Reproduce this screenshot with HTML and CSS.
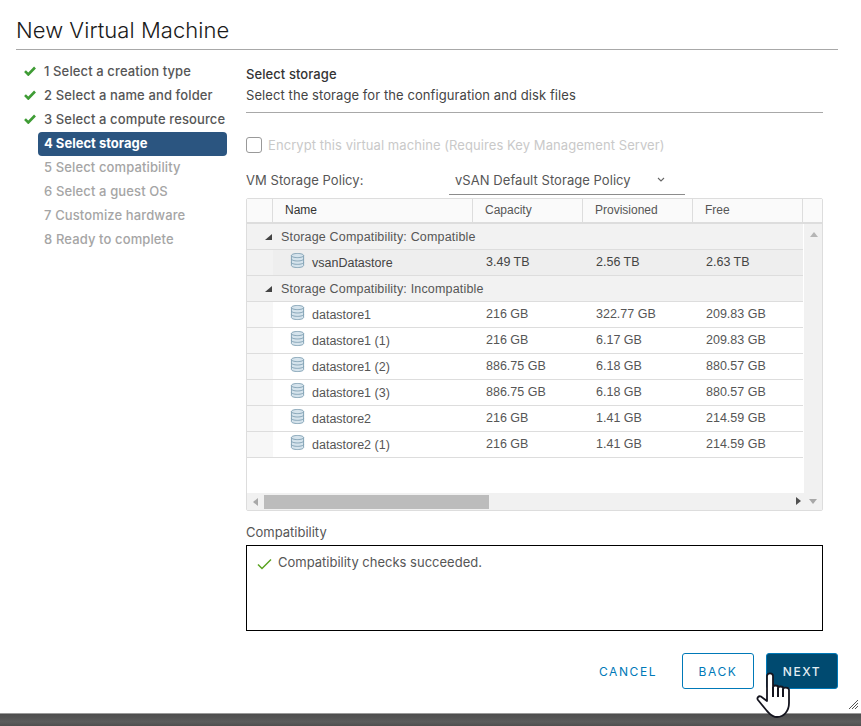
FILE: index.html
```html
<!DOCTYPE html>
<html lang="en">
<head>
  <meta charset="UTF-8">
  <title>New Virtual Machine</title>
  <link rel="stylesheet" href="styles.css">
</head>
<body>
  <svg class="defs" width="0" height="0">
    <symbol id="db" viewBox="0 0 16 17">
      <path d="M1.5 3.2C1.5 1.9 4.4 1 8 1s6.500.9 6.500 2.200v10.600C14.500 15.100 11.600 16 8 16s-6.500-.9-6.500-2.200z" fill="#d5e3ec" stroke="#7f9fb2"/>
      <path d="M1.500 3.200C1.500 4.500 4.400 5.400 8 5.400s6.500-.9 6.500-2.200M1.500 6.800C1.500 8.100 4.400 9 8 9s6.500-.9 6.500-2.200M1.500 10.400c0 1.300 2.900 2.200 6.500 2.200s6.500-.9 6.500-2.200" fill="none" stroke="#7f9fb2"/>
    </symbol>
    <symbol id="tick" viewBox="0 0 12 10">
      <path d="M1 5.200l3.300 3.300L11 1.500" fill="none" stroke="#3f9c35" stroke-width="2.600"/>
    </symbol>
  </svg>

  <div class="dialog">
    <h1 class="title">New Virtual Machine</h1>

    <div class="content">
      <ul class="steps">
        <li class="step done"><svg class="tick"><use href="#tick"/></svg>1 Select a creation type</li>
        <li class="step done"><svg class="tick"><use href="#tick"/></svg>2 Select a name and folder</li>
        <li class="step done"><svg class="tick"><use href="#tick"/></svg>3 Select a compute resource</li>
        <li class="step active">4 Select storage</li>
        <li class="step">5 Select compatibility</li>
        <li class="step">6 Select a guest OS</li>
        <li class="step">7 Customize hardware</li>
        <li class="step">8 Ready to complete</li>
      </ul>

      <div class="main">
        <h2 class="section-title">Select storage</h2>
        <p class="section-desc">Select the storage for the configuration and disk files</p>

        <label class="encrypt"><span class="checkbox"></span>Encrypt this virtual machine (Requires Key Management Server)</label>

        <div class="policy">
          <span class="policy-label">VM Storage Policy:</span>
          <div class="policy-select">vSAN Default Storage Policy
            <svg class="chevron" width="8" height="5" viewBox="0 0 8 5"><path d="M1 1l3 3 3-3" fill="none" stroke="#666" stroke-width="1.100"/></svg>
          </div>
        </div>

        <div class="grid">
          <div class="grid-head">
            <div class="hcell hcell-check"></div>
            <div class="hcell hcell-name">Name</div>
            <div class="hcell">Capacity</div>
            <div class="hcell">Provisioned</div>
            <div class="hcell">Free</div>
            <div class="hcell hcell-end"></div>
          </div>
          <div class="grid-mid">
            <div class="grid-body">
              <div class="group group-first"><i class="caret"></i>Storage Compatibility: Compatible</div>
              <div class="row selected">
                <div class="gutter"></div>
                <div class="cell cell-name"><svg class="db"><use href="#db"/></svg>vsanDatastore</div>
                <div class="cell">3.49 TB</div><div class="cell">2.56 TB</div><div class="cell">2.63 TB</div>
              </div>
              <div class="group"><i class="caret"></i>Storage Compatibility: Incompatible</div>
              <div class="row">
                <div class="gutter"></div>
                <div class="cell cell-name"><svg class="db"><use href="#db"/></svg>datastore1</div>
                <div class="cell">216 GB</div><div class="cell">322.77 GB</div><div class="cell">209.83 GB</div>
              </div>
              <div class="row">
                <div class="gutter"></div>
                <div class="cell cell-name"><svg class="db"><use href="#db"/></svg>datastore1 (1)</div>
                <div class="cell">216 GB</div><div class="cell">6.17 GB</div><div class="cell">209.83 GB</div>
              </div>
              <div class="row">
                <div class="gutter"></div>
                <div class="cell cell-name"><svg class="db"><use href="#db"/></svg>datastore1 (2)</div>
                <div class="cell">886.75 GB</div><div class="cell">6.18 GB</div><div class="cell">880.57 GB</div>
              </div>
              <div class="row">
                <div class="gutter"></div>
                <div class="cell cell-name"><svg class="db"><use href="#db"/></svg>datastore1 (3)</div>
                <div class="cell">886.75 GB</div><div class="cell">6.18 GB</div><div class="cell">880.57 GB</div>
              </div>
              <div class="row">
                <div class="gutter"></div>
                <div class="cell cell-name"><svg class="db"><use href="#db"/></svg>datastore2</div>
                <div class="cell">216 GB</div><div class="cell">1.41 GB</div><div class="cell">214.59 GB</div>
              </div>
              <div class="row">
                <div class="gutter"></div>
                <div class="cell cell-name"><svg class="db"><use href="#db"/></svg>datastore2 (1)</div>
                <div class="cell">216 GB</div><div class="cell">1.41 GB</div><div class="cell">214.59 GB</div>
              </div>
            </div>
            <div class="vscroll"><i class="arrow-up"></i></div>
          </div>
          <div class="hscroll">
            <i class="arrow-left"></i>
            <div class="hthumb"></div>
            <i class="arrow-right"></i>
            <i class="arrow-down"></i>
          </div>
        </div>

        <div class="compat-label">Compatibility</div>
        <div class="compat-box">
          <svg class="compat-tick" width="15" height="12" viewBox="0 0 15 12"><path d="M1 6.500l4 4L14 1.500" fill="none" stroke="#5aa220" stroke-width="1.500"/></svg>
          Compatibility checks succeeded.
        </div>
      </div>
    </div>

    <div class="actions">
      <button class="btn btn-flat">CANCEL</button>
      <button class="btn btn-outline">BACK</button>
      <button class="btn btn-primary">NEXT</button>
    </div>

    <svg class="resize" width="9" height="9" viewBox="0 0 9 9"><path d="M0 9L9 0M3 9l6-6M6 9l3-3" stroke="#555" stroke-width="1"/></svg>
    <svg class="cursor" width="38" height="50" viewBox="0 0 38 50">
      <path d="M11 5c0-3.500 6-3.500 6 0v11c0-2 5-2 5 0v1c0-2 5-2 5 0v1c0-2 6-2 6 1v13c0 8-5 14-12 14-5 0-7-3-10-6L2 29c-1.500-2 .5-4.500 3-3.500L11 30z" fill="#fff" stroke="#14141e" stroke-width="1.800" stroke-linejoin="round"/>
      <path d="M17 16v10M22 17v9M27 18v8" fill="none" stroke="#14141e" stroke-width="2"/>
    </svg>
  </div>

  <div class="backdrop"></div>
</body>
</html>
```

FILE: styles.css
```css
html, body {
  margin: 0;
  height: 100%;
}

body {
  display: flex;
  flex-direction: column;
  height: 726px;
  overflow: hidden;
  background: #fff;
  font-family: "Inter", "Noto Sans", sans-serif;
  font-size: 13px;
  color: #565656;
}

.defs {
  position: absolute;
}

.dialog {
  position: relative;
  flex: 1;
  padding: 0 23px 0 16px;
  display: flex;
  flex-direction: column;
  min-height: 0;
}

.title {
  margin: 0;
  height: 50px;
  box-sizing: border-box;
  padding-top: 16px;
  border-bottom: 1px solid #a8a8a8;
  font-size: 22px;
  line-height: 28px;
  font-weight: 300;
  letter-spacing: .05px;
  color: #1a1a1a;
}

.content {
  display: flex;
  padding-top: 10px;
}

/* left step list */
.steps {
  list-style: none;
  margin: 0 0 0 22px;
  padding: 0;
  width: 189px;
  flex: none;
}

.step {
  position: relative;
  height: 24px;
  line-height: 22px;
  padding-left: 6px;
  font-size: 13px;
  font-weight: 550;
  letter-spacing: .12px;
  color: #a5a5a5;
  border-radius: 4px;
  white-space: nowrap;
}

.step.done {
  color: #565656;
}

.step.active {
  background: #2b5580;
  color: #fff;
  font-weight: 700;
  letter-spacing: 0;
}

.tick {
  position: absolute;
  left: -14px;
  top: 6px;
  width: 12px;
  height: 10px;
}

/* main column */
.main {
  margin-left: 19px;
  width: 577px;
}

.section-title {
  margin: 0;
  padding-top: 4px;
  font-size: 13px;
  line-height: 20px;
  font-weight: 500;
  letter-spacing: .08px;
  color: #333;
}

.section-desc {
  margin: 1px 0 0;
  padding-bottom: 7px;
  border-bottom: 1px solid #a8a8a8;
  line-height: 20px;
  letter-spacing: .08px;
  color: #444;
}

.encrypt {
  display: flex;
  align-items: center;
  margin-top: 24px;
  height: 16px;
  letter-spacing: .07px;
  color: #c9c9c9;
}

.checkbox {
  width: 14px;
  height: 14px;
  margin-right: 6px;
  border: 1px solid #999;
  border-radius: 3px;
}

.policy {
  display: flex;
  align-items: flex-end;
  margin-top: 15px;
  height: 27px;
  letter-spacing: .05px;
}

.policy-label {
  width: 203px;
  line-height: 24px;
  padding-bottom: 3px;
}

.policy-select {
  position: relative;
  width: 230px;
  height: 26px;
  line-height: 24px;
  padding-left: 6px;
  border-bottom: 1px solid #8c8c8c;
}

.chevron {
  position: absolute;
  right: 20px;
  top: 9px;
}

/* datagrid */
.grid {
  margin-top: 3px;
  border: 1px solid #ddd;
  border-radius: 2px;
  height: 311px;
  display: flex;
  flex-direction: column;
  font-family: "Liberation Sans", Arial, sans-serif;
  font-size: 12.5px;
}

.grid-head {
  display: grid;
  grid-template-columns: 26px 200px 110px 110px 110px 19px;
  height: 23px;
  border-bottom: 2px solid #ddd;
  background: #fafafa;
  flex: none;
}

.hcell {
  border-right: 1px solid #ddd;
  padding-left: 12px;
  line-height: 22px;
  font-size: 12px;
  color: #565656;
}

.hcell-name {
  color: #333;
}

.hcell-end {
  border-right: 0;
}

.grid-mid {
  flex: 1;
  display: flex;
  min-height: 0;
}

.grid-body {
  width: 556px;
  flex: none;
}

.group {
  height: 25px;
  line-height: 27px;
  padding-left: 34px;
  position: relative;
  background: #f2f2f2;
  border-bottom: 1px solid #ddd;
  letter-spacing: .17px;
  color: #565656;
}

.caret {
  position: absolute;
  left: 18px;
  top: 10px;
  width: 0;
  height: 0;
  border-left: 7px solid transparent;
  border-bottom: 6px solid #444;
}

.row {
  display: grid;
  grid-template-columns: 26px 200px 110px 110px 110px;
  height: 25px;
  line-height: 24px;
  border-bottom: 1px solid #ddd;
}

.gutter {
  background: #f7f7f7;
}

.row.selected {
  background: #eee;
}

.row.selected .gutter {
  background: #f2f2f2;
}

.cell {
  padding-left: 13px;
  color: #565656;
  white-space: nowrap;
}

.cell-name {
  display: flex;
  align-items: center;
  padding-left: 17px;
}

.selected .cell {
  color: #444;
}

.db {
  width: 15px;
  height: 17px;
  margin-right: 7px;
  margin-top: -5px;
}

.vscroll {
  flex: 1;
  background: #f1f1f1;
  position: relative;
  margin-left: 1px;
}

.arrow-up {
  position: absolute;
  left: 6px;
  top: 8px;
  border: 4px solid transparent;
  border-top: 0;
  border-bottom: 5px solid #b5b5b5;
}

.hscroll {
  flex: none;
  height: 17px;
  background: #f1f1f1;
  display: flex;
  align-items: center;
  position: relative;
}

.arrow-left {
  margin-left: 6px;
  border: 4px solid transparent;
  border-left: 0;
  border-right: 5px solid #a8a8a8;
}

.hthumb {
  margin-left: 6px;
  width: 225px;
  height: 14px;
  background: #bcbcbc;
}

.arrow-right {
  position: absolute;
  right: 21px;
  top: 4px;
  border: 4px solid transparent;
  border-right: 0;
  border-left: 5px solid #505050;
}

.arrow-down {
  position: absolute;
  right: 5px;
  top: 6px;
  border: 4px solid transparent;
  border-bottom: 0;
  border-top: 5px solid #a8a8a8;
}

.compat-label {
  margin-top: 12px;
  line-height: 18px;
}

.compat-box {
  box-sizing: border-box;
  margin-top: 4px;
  height: 86px;
  border: 1px solid #000;
  padding: 8px 10px;
  display: flex;
  align-items: flex-start;
  line-height: 17px;
}

.compat-tick {
  margin: 4px 6px 0 0;
}

/* footer buttons */
.actions {
  display: flex;
  justify-content: flex-end;
  align-items: center;
  gap: 12px;
  margin-top: 22px;
}

.btn {
  box-sizing: border-box;
  width: 72px;
  height: 36px;
  padding: 0;
  border-radius: 3px;
  border: 1px solid transparent;
  background: none;
  font-family: inherit;
  font-size: 12px;
  font-weight: 400;
  letter-spacing: 1.600px;
  color: #0079b8;
}

.btn-flat {
  width: 80px;
  margin-right: 2px;
}

.btn-outline {
  border-color: #0079b8;
}

.btn-primary {
  background: #004a70;
  border-color: #0079b8;
  color: #e4eef3;
  font-weight: 500;
}

.resize {
  position: absolute;
  right: 3px;
  bottom: 4px;
}

.cursor {
  position: absolute;
  left: 756px;
  top: 671px;
}

.backdrop {
  flex: none;
  height: 12px;
  background: linear-gradient(#4e4e4e, #5c5c5c 65%, #4f4f4f);
  border-top: 1px solid #9a9a9a;
}
```
